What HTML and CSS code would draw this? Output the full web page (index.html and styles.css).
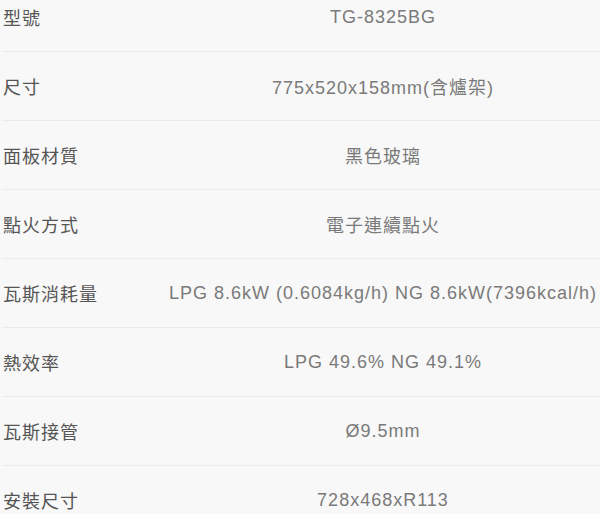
FILE: index.html
```html
<!DOCTYPE html>
<html lang="zh-Hant">
<head>
    <meta charset="UTF-8">
    <meta name="viewport" content="width=device-width, initial-scale=1.0">
    <title>產品規格</title>
    <link rel="stylesheet" href="styles.css">
</head>
<body>
    <div class="spec">
        <div class="row">
            <div class="label">型號</div>
            <div class="value">TG-8325BG</div>
        </div>
        <div class="row">
            <div class="label">尺寸</div>
            <div class="value">775x520x158mm(含爐架)</div>
        </div>
        <div class="row">
            <div class="label">面板材質</div>
            <div class="value">黑色玻璃</div>
        </div>
        <div class="row">
            <div class="label">點火方式</div>
            <div class="value">電子連續點火</div>
        </div>
        <div class="row">
            <div class="label">瓦斯消耗量</div>
            <div class="value">LPG 8.6kW (0.6084kg/h) NG 8.6kW(7396kcal/h)</div>
        </div>
        <div class="row">
            <div class="label">熱效率</div>
            <div class="value">LPG 49.6% NG 49.1%</div>
        </div>
        <div class="row">
            <div class="label">瓦斯接管</div>
            <div class="value">Ø9.5mm</div>
        </div>
        <div class="row">
            <div class="label">安裝尺寸</div>
            <div class="value">728x468xR113</div>
        </div>
    </div>
</body>
</html>
```

FILE: styles.css
```css
* {
    margin: 0;
    padding: 0;
    box-sizing: border-box;
}

body {
    font-family: "Liberation Sans", Arial, "Noto Sans CJK TC", sans-serif;
    background: #f8f8f8;
    overflow: hidden;
}

.spec {
    margin-top: -17px;
    padding-left: 2px;
}

.row {
    display: grid;
    grid-template-columns: 164px 1fr;
    align-items: center;
    height: 69px;
    border-bottom: 1px solid #ebebeb;
    font-size: 18px;
    letter-spacing: 1px;
}

.label {
    color: #555;
    padding-left: 1px;
}

.value {
    color: #7a7a7a;
    text-align: center;
    white-space: nowrap;
}
```
